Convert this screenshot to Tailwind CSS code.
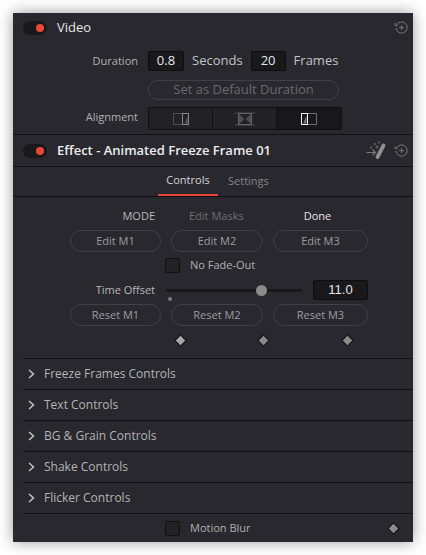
<!DOCTYPE html>
<html lang="en">
<head>
  <meta charset="UTF-8">
  <title>Inspector</title>
  <script src="https://cdn.jsdelivr.net/npm/@tailwindcss/browser@4"></script>
</head>
<body class="bg-white font-['Open_Sans',sans-serif] overflow-hidden h-[555px] pt-[13px]">
  <div class="ml-[13px] w-[400px] h-[529px] bg-[#28282e] shadow-[0_0_14px_rgba(0,0,0,0.4)] text-[11px] text-[#b4b4b4] flex flex-col">

    <!-- Video header -->
    <div class="h-[29px] shrink-0 flex items-center pl-[10px] pr-[4px]">
      <div class="w-[24px] h-[14px] rounded-full bg-[#19191b] flex items-center justify-end pr-[3px]"><div class="w-[8px] h-[8px] rounded-full bg-[#e8483a]"></div></div>
      <span class="ml-[10px] text-[13px] text-[#e6e6e6]">Video</span>
      <svg class="ml-auto w-[15px] h-[15px] text-[#77777b]" viewBox="0 0 15 15" fill="none" stroke="currentColor" stroke-width="1"><path d="M2.6 5A5.6 5.6 0 1 1 2 8"/><path d="M1 3v2.6h2.8"/><path d="M7.6 5.2v5M5 7.7h5"/></svg>
    </div>

    <!-- Duration -->
    <div class="h-[20px] mt-[9px] shrink-0 flex items-center">
      <span class="w-[125px] text-right text-[#b0b0b0]">Duration</span>
      <div class="ml-[10px] w-[36px] h-[20px] bg-[#19191b] border border-[#0e0e10] rounded-[2px] flex items-center justify-center text-[13px] text-[#e6e6e6]">0.8</div>
      <span class="ml-[8px] text-[13px] text-[#c4c4c4]">Seconds</span>
      <div class="ml-[8px] w-[35px] h-[20px] bg-[#19191b] border border-[#0e0e10] rounded-[2px] flex items-center justify-center text-[13px] text-[#e6e6e6]">20</div>
      <span class="ml-[8px] text-[13px] text-[#c4c4c4]">Frames</span>
    </div>

    <!-- Default duration -->
    <div class="mt-[9px] ml-[135px] w-[191px] h-[20px] shrink-0 rounded-full border border-[#404046] flex items-center justify-center text-[13px] text-[#69696e]">Set as Default Duration</div>

    <!-- Alignment -->
    <div class="mt-[7px] h-[23px] shrink-0 flex items-center">
      <span class="w-[125px] pb-[2px] text-right text-[#b0b0b0]">Alignment</span>
      <div class="ml-[10px] w-[194px] h-[23px] grid grid-cols-3 border border-[#101012] rounded-[2px] bg-[#222226]">
        <div class="flex items-center justify-center border-r border-[#101012]">
          <svg class="w-[16px] h-[12px]" viewBox="0 0 16 12" fill="none"><rect x="0.5" y="0.5" width="15" height="11" stroke="#4c4c50"/><rect x="9.5" y="0.5" width="6" height="11" stroke="#85858a"/><path d="M12 10.5h2.5v-8z" fill="#5e5e62"/></svg>
        </div>
        <div class="flex items-center justify-center border-r border-[#101012]">
          <svg class="w-[20px] h-[14px]" viewBox="0 0 20 14" fill="none"><path d="M0 1h20M0 13h20" stroke="#4c4c50"/><rect x="3.5" y="1.5" width="13" height="11" stroke="#66666a"/><path d="M4 2l5.5 5L4 12zM16 2l-5.5 5 5.5 5z" fill="#4e4e52"/></svg>
        </div>
        <div class="flex items-center justify-center bg-[#18181a]">
          <svg class="w-[16px] h-[12px]" viewBox="0 0 16 12" fill="none"><rect x="0.5" y="0.5" width="15" height="11" stroke="#6c6c70"/><path d="M2 10.5h3.5v-8z" fill="#77777b"/><rect x="0.5" y="0.5" width="6" height="11" stroke="#f0f0f0"/></svg>
        </div>
      </div>
    </div>

    <!-- Effect header -->
    <div class="mt-[4px] h-[33px] shrink-0 flex items-center pl-[10px] pr-[4px] border-y border-[#101012]">
      <div class="w-[24px] h-[14px] rounded-full bg-[#19191b] flex items-center justify-end pr-[3px]"><div class="w-[8px] h-[8px] rounded-full bg-[#e8483a]"></div></div>
      <span class="ml-[10px] text-[13px] font-semibold text-[#ececec]">Effect - Animated Freeze Frame 01</span>
      <svg class="ml-auto w-[22px] h-[19px] text-[#77777b]" viewBox="0 0 22 19" fill="none"><path d="M17.5 4.5 11.5 16" stroke="#8f8f93" stroke-width="3.8" stroke-linecap="round"/><path d="M0.5 11.5h9M6.5 8.5l3 3-3 3" stroke="currentColor" stroke-width="1.1"/><circle cx="9" cy="3" r="1.1" fill="#5f5f63"/><circle cx="13" cy="1.5" r="1" fill="#5f5f63"/><circle cx="5" cy="6.5" r="1.1" fill="#5f5f63"/><circle cx="11" cy="6" r="1.4" fill="#5f5f63"/></svg>
      <svg class="ml-[6px] w-[15px] h-[15px] text-[#77777b]" viewBox="0 0 15 15" fill="none" stroke="currentColor" stroke-width="1"><path d="M2.6 5A5.6 5.6 0 1 1 2 8"/><path d="M1 3v2.6h2.8"/><path d="M7.6 5.2v5M5 7.7h5"/></svg>
    </div>

    <!-- Tabs -->
    <div class="h-[30px] shrink-0 flex justify-start pl-[145px] border-b border-[#101012]">
      <div class="w-[60px] h-[29px] flex items-center justify-center border-b-2 border-[#e8483a] text-[#d6d6d6]">Controls</div>
      <div class="ml-[10px] h-[29px] flex items-center text-[#85858a]">Settings</div>
    </div>

    <!-- Mode -->
    <div class="mt-[11px] h-[16px] shrink-0 flex items-center">
      <span class="w-[142px] text-right text-[#b8b8b8]">MODE</span>
      <span class="ml-[34px] text-[#6f6f74]">Edit Masks</span>
      <span class="ml-[60px] text-[#e6e6e6]">Done</span>
    </div>

    <div class="mt-[6px] ml-[57px] h-[22px] shrink-0 flex text-[#9c9ca0]">
      <div class="w-[91px] rounded-full border border-[#404046] flex items-center justify-center">Edit M1</div>
      <div class="ml-[10px] w-[92px] rounded-full border border-[#404046] flex items-center justify-center">Edit M2</div>
      <div class="ml-[10px] w-[95px] rounded-full border border-[#404046] flex items-center justify-center">Edit M3</div>
    </div>

    <!-- No fade out -->
    <div class="mt-[6px] h-[15px] shrink-0 flex items-center pl-[152px]">
      <div class="w-[15px] h-[15px] rounded-[2px] bg-[#222224] border border-[#101012]"></div>
      <span class="ml-[10px] text-[#b0b0b0]">No Fade-Out</span>
    </div>

    <!-- Time offset -->
    <div class="mt-[7px] h-[20px] shrink-0 flex items-center">
      <span class="w-[142px] text-right text-[#b8b8b8]">Time Offset</span>
      <div class="relative ml-[11px] w-[136px] h-[3px] rounded-full bg-[#19191b]">
        <div class="absolute left-[90px] top-[-4px] w-[11px] h-[11px] rounded-full bg-[#8b8b8b]"></div>
        <div class="absolute left-[2px] top-[8px] w-[4px] h-[4px] rounded-full bg-[#77777b]"></div>
      </div>
      <div class="ml-[11px] w-[55px] h-[20px] bg-[#19191b] border border-[#0e0e10] rounded-[2px] flex items-center justify-center font-['Liberation_Sans',sans-serif] text-[13px] text-[#e6e6e6]">11.0</div>
    </div>

    <div class="mt-[4px] ml-[57px] h-[22px] shrink-0 flex text-[#9c9ca0]">
      <div class="w-[91px] rounded-full border border-[#404046] flex items-center justify-center">Reset M1</div>
      <div class="ml-[10px] w-[92px] rounded-full border border-[#404046] flex items-center justify-center">Reset M2</div>
      <div class="ml-[10px] w-[95px] rounded-full border border-[#404046] flex items-center justify-center">Reset M3</div>
    </div>

    <!-- Keyframe diamonds -->
    <div class="mt-[10px] h-[10px] shrink-0 relative">
      <div class="absolute left-[164px] top-[1px] w-[7px] h-[7px] rotate-45 bg-[#a8a8a8] outline outline-[#151517]"></div>
      <div class="absolute left-[247px] top-[1px] w-[7px] h-[7px] rotate-45 bg-[#8a8a8a] outline outline-[#151517]"></div>
      <div class="absolute left-[331px] top-[1px] w-[7px] h-[7px] rotate-45 bg-[#8a8a8a] outline outline-[#151517]"></div>
    </div>

    <!-- Collapsed sections -->
    <div class="mt-[12px] ml-[10px] shrink-0 text-[12px] text-[#b4b4b4]">
      <div class="h-[31px] flex items-center border-t border-[#101012]"><svg class="ml-[5px] w-[7px] h-[10px]" viewBox="0 0 7 10" fill="none" stroke="#c4c4c4" stroke-width="1.5"><path d="M1 1l4.5 4L1 9"/></svg><span class="ml-[9px]">Freeze Frames Controls</span></div>
      <div class="h-[31px] flex items-center border-t border-[#101012]"><svg class="ml-[5px] w-[7px] h-[10px]" viewBox="0 0 7 10" fill="none" stroke="#c4c4c4" stroke-width="1.5"><path d="M1 1l4.5 4L1 9"/></svg><span class="ml-[9px]">Text Controls</span></div>
      <div class="h-[31px] flex items-center border-t border-[#101012]"><svg class="ml-[5px] w-[7px] h-[10px]" viewBox="0 0 7 10" fill="none" stroke="#c4c4c4" stroke-width="1.5"><path d="M1 1l4.5 4L1 9"/></svg><span class="ml-[9px]">BG &amp; Grain Controls</span></div>
      <div class="h-[31px] flex items-center border-t border-[#101012]"><svg class="ml-[5px] w-[7px] h-[10px]" viewBox="0 0 7 10" fill="none" stroke="#c4c4c4" stroke-width="1.5"><path d="M1 1l4.5 4L1 9"/></svg><span class="ml-[9px]">Shake Controls</span></div>
      <div class="h-[31px] flex items-center border-t border-[#101012]"><svg class="ml-[5px] w-[7px] h-[10px]" viewBox="0 0 7 10" fill="none" stroke="#c4c4c4" stroke-width="1.5"><path d="M1 1l4.5 4L1 9"/></svg><span class="ml-[9px]">Flicker Controls</span></div>
      <div class="h-[29px] flex items-center border-t border-[#101012] pl-[142px] pr-[16px]">
        <div class="w-[15px] h-[15px] rounded-[2px] bg-[#222224] border border-[#101012]"></div>
        <span class="ml-[10px] text-[11px] text-[#b0b0b0]">Motion Blur</span>
        <div class="ml-auto w-[7px] h-[7px] rotate-45 bg-[#8a8a8a] outline outline-[#151517]"></div>
      </div>
    </div>
  </div>
</body>
</html>
